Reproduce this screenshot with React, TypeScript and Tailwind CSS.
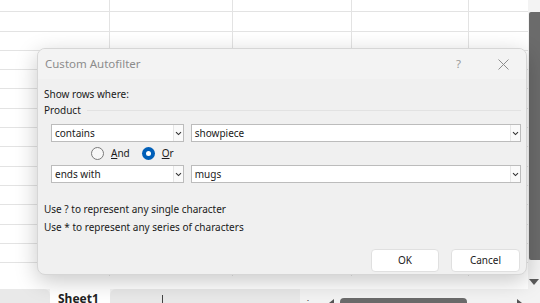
import React from "react";

const rowHeights = [11, 20, 19, 19, 19, 20, 19, 19, 20, 19, 19, 20, 19, 19, 14];
const colWidths = [110, 123, 119, 117, 59];

function Chevron() {
  return (
    <svg width="7" height="5" viewBox="0 0 7 5" className="text-[#333]">
      <path d="M1 1.2 L3.5 3.6 L6 1.2" fill="none" stroke="currentColor" strokeWidth="1.1" />
    </svg>
  );
}

function Combo({ value, width }: { value: string; width: string }) {
  return (
    <div className={`${width} h-[18px] flex bg-white border border-[#bcbcbc]`}>
      <div className="flex-1 px-[3px] text-[10px] leading-[16px] text-[#1a1a1a]">{value}</div>
      <div className="w-[10px] flex items-center justify-center border-l border-[#e6e6e6] bg-[#fafafa]">
        <Chevron />
      </div>
    </div>
  );
}

export default function App() {
  return (
    <div
      className="relative w-[540px] h-[303px] overflow-hidden bg-white"
      style={{ fontFamily: '"Segoe UI", "Noto Sans", "Liberation Sans", sans-serif' }}
    >
      {/* spreadsheet grid */}
      <div className="flex h-[289px]">
        <div className="flex-1 flex flex-col">
          {rowHeights.map((h, i) => (
            <div
              key={i}
              className={`flex ${i === 0 ? "" : "border-t border-[#e3e3e3]"}`}
              style={{ height: h }}
            >
              {colWidths.map((w, j) => (
                <div
                  key={j}
                  className={j < 4 ? "border-r border-[#e3e3e3]" : ""}
                  style={{ width: w }}
                />
              ))}
            </div>
          ))}
        </div>
        {/* vertical scrollbar */}
        <div className="w-[13px] bg-[#f3f3f3] flex flex-col items-end pt-[12px]">
          <div className="w-[11px] h-[248px] bg-[#6b6b6b] rounded-l-[2px]" />
          <div className="mt-[19px] mr-[1px] w-0 h-0 border-l-[5px] border-r-[5px] border-t-[6px] border-l-transparent border-r-transparent border-t-[#5a5a5a]" />
        </div>
      </div>

      {/* sheet tabs bar */}
      <div className="flex h-[14px] bg-[#f3f3f3] items-end">
        <div className="w-[50px] h-[14px] bg-[#e9e9e9] rounded-tr-[6px]" />
        <div className="w-[60px] h-[14px] bg-white pl-[8px] text-[12px] font-bold leading-[20px] text-[#222]">
          Sheet1
        </div>
        <div className="w-[190px] h-[14px] bg-[#e9e9e9] rounded-tl-[6px] relative">
          <div className="absolute left-[52px] top-[6px] w-[1px] h-[10px] bg-[#444]" />
        </div>
        <div className="flex-1 h-[14px] flex items-start pt-[9px] gap-[6px] pl-[3px]">
          <div className="text-[10px] leading-[10px] text-[#555]">⋮</div>
          <div className="w-0 h-0 ml-[10px] mt-[1px] border-t-[4px] border-b-[4px] border-r-[5px] border-t-transparent border-b-transparent border-r-[#555]" />
          <div className="w-[127px] h-[8px] bg-[#6b6b6b] rounded-[4px]" />
          <div className="w-0 h-0 ml-[44px] mt-[1px] border-t-[4px] border-b-[4px] border-l-[5px] border-t-transparent border-b-transparent border-l-[#555]" />
        </div>
      </div>

      {/* dialog */}
      <div className="absolute left-[37px] top-[48px] w-[490px] h-[227px] rounded-[8px] border border-[#d6d6d6] bg-[#f0f0f0] shadow-[0_6px_22px_rgba(0,0,0,0.22)] overflow-hidden">
        <div className="h-[30px] flex items-center bg-[#f3f3f3] pl-[7px] pr-[17px]">
          <div className="flex-1 text-[11.5px] text-[#8c8c8c]">Custom Autofilter</div>
          <div className="text-[11.5px] text-[#9a9a9a] mr-[37px]">?</div>
          <svg width="11" height="11" viewBox="0 0 11 11">
            <path d="M0.5 0.5 L10.5 10.5 M10.5 0.5 L0.5 10.5" stroke="#8c8c8c" strokeWidth="1" />
          </svg>
        </div>
        <div className="pl-[6px] pr-[5px] text-[10px] text-[#1a1a1a]">
          <div className="mt-[7px] leading-[16px]">Show rows where:</div>
          <div className="flex items-center leading-[16px]">
            <span>Product</span>
            <div className="flex-1 ml-[6px] h-[1px] bg-[#e2e2e2]" />
          </div>
          <div className="pl-[7px]">
            <div className="mt-[6px] flex gap-[7px]">
              <Combo value="contains" width="w-[133px]" />
              <Combo value="showpiece" width="w-[331px]" />
            </div>
            <div className="h-[23px] flex items-center pl-[40px]">
              <div className="w-[13px] h-[13px] rounded-full border border-[#7a7a7a] bg-[#f7f7f7]" />
              <span className="ml-[7px]">
                <span className="underline">A</span>nd
              </span>
              <div className="ml-[12px] w-[13px] h-[13px] rounded-full bg-[#005fb8] flex items-center justify-center">
                <div className="w-[5px] h-[5px] rounded-full bg-white" />
              </div>
              <span className="ml-[7px]">
                <span className="underline">O</span>r
              </span>
            </div>
            <div className="flex gap-[7px]">
              <Combo value="ends with" width="w-[133px]" />
              <Combo value="mugs" width="w-[331px]" />
            </div>
          </div>
          <div className="mt-[17px] leading-[18px]">Use ? to represent any single character</div>
          <div className="leading-[18px]">Use * to represent any series of characters</div>
          <div className="mt-[13px] flex justify-end gap-[12px] pr-[1px]">
            <button className="w-[68px] h-[23px] bg-white border border-[#e0e0e0] rounded-[4px] text-[10px] text-[#1a1a1a]">
              OK
            </button>
            <button className="w-[69px] h-[23px] bg-white border border-[#e0e0e0] rounded-[4px] text-[10px] text-[#1a1a1a]">
              Cancel
            </button>
          </div>
        </div>
      </div>
    </div>
  );
}
